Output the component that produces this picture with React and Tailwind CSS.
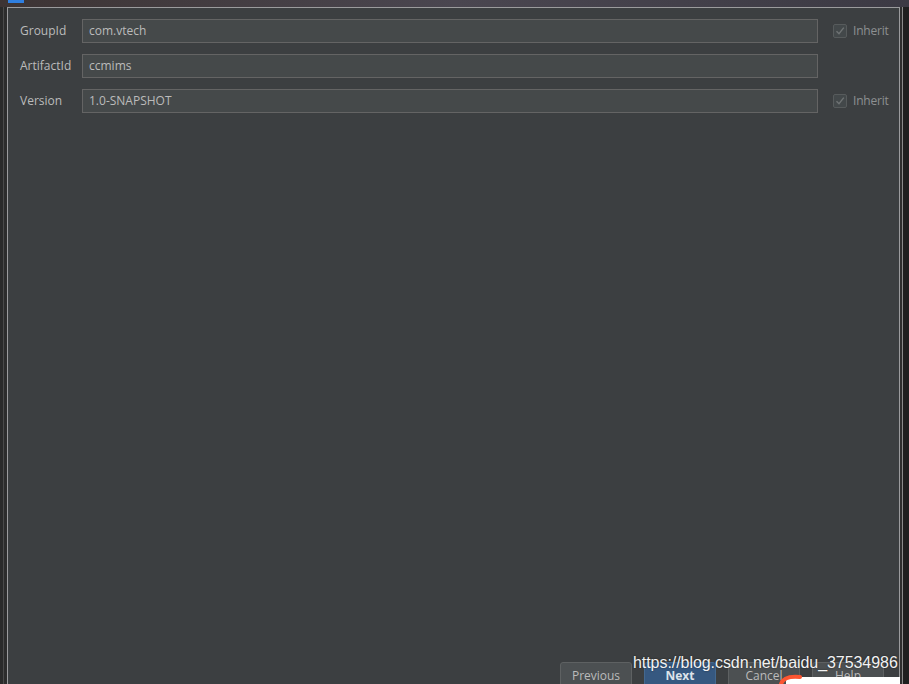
import React from 'react';

const font = { fontFamily: '"Open Sans", "Noto Sans", sans-serif' };

const Field = ({ label, value, inherit }) => (
  <div className="flex items-center h-[24px]">
    <div className="w-[62px] text-[12px] text-[#bbbbbb]">{label}</div>
    <div className="w-[736px] h-[24px] bg-[#45494a] border border-[#646464] flex items-center pl-[6px] text-[12px] text-[#bbbbbb]">
      {value}
    </div>
    {inherit && (
      <div className="flex items-center ml-[15px]">
        <div className="w-[14px] h-[14px] border border-[#575b5c] bg-[#43484a] rounded-[2px] flex items-center justify-center">
          <svg width="10" height="10" viewBox="0 0 10 10">
            <path d="M1.5 5.2 L4 7.8 L8.8 1.6" fill="none" stroke="#6f7374" strokeWidth="1.4" />
          </svg>
        </div>
        <span className="ml-[6px] text-[12px] tracking-[-0.2px] text-[#8d9091]">Inherit</span>
      </div>
    )}
  </div>
);

const Btn = ({ children, primary }) => (
  <div
    className={
      'w-[72px] h-[24px] rounded-t-[3px] border flex items-start justify-center pt-[4px] text-[12px] ' +
      (primary
        ? 'bg-[#365880] border-[#43688f] text-[#dde3ea] font-bold'
        : 'bg-[#4c5052] border-[#5e6162] text-[#bbbbbb]')
    }
  >
    {children}
  </div>
);

export default function App() {
  return (
    <div className="w-[909px] h-[684px] overflow-hidden bg-[#2b2b2d] flex flex-col relative" style={font}>
      {/* blurred desktop strip */}
      <div className="h-[7px] shrink-0 bg-gradient-to-r from-[#3d3434] via-[#4a4650] to-[#3c3a44] relative">
        <div className="absolute left-[8px] top-0 w-[16px] h-[3px] bg-[#2f7fe0]" />
      </div>
      <div className="flex flex-1 min-h-0">
        <div className="w-[3px] bg-[#2a2a2a]" />
        <div className="w-[1px] bg-[#4a4a4a]" />
        <div className="w-[3px] bg-[#2c2c2c]" />
        {/* window */}
        <div className="w-[893px] border-l border-r border-t border-[#9b9b9d] bg-[#3c3f41] flex flex-col">
          <div className="pl-[12px] pt-[11px] flex flex-col gap-[11px]">
            <Field label="GroupId" value="com.vtech" inherit />
            <Field label="ArtifactId" value="ccmims" />
            <Field label="Version" value="1.0-SNAPSHOT" inherit />
          </div>
          <div className="flex-1" />
          <div className="flex gap-[12px] pl-[552px] h-[22px]">
            <Btn>Previous</Btn>
            <Btn primary>Next</Btn>
            <Btn>Cancel</Btn>
            <Btn>Help</Btn>
          </div>
        </div>
        <div className="w-[2px] bg-[#2e2e2e]" />
        <div className="w-[1px] bg-[#8a8a8a]" />
        <div className="flex-1 bg-[#1f1f1f]" />
      </div>
      {/* watermark overlay */}
      <div
        className="absolute left-[633px] top-[653px] text-[16px] tracking-[-0.06px] leading-[20px] text-[#f2f2f2] whitespace-nowrap"
        style={{ fontFamily: '"Liberation Sans", Arial, sans-serif', textShadow: '0 0 2px rgba(0,0,0,0.6)' }}
      >
        https://blog.csdn.net/baidu_37534986
      </div>
      <div className="absolute left-[786px] top-[677px] w-[114px] h-[7px] bg-white" />
      <svg className="absolute left-[778px] top-[674px]" width="26" height="10" viewBox="0 0 26 10">
        <path d="M3 10 C5 4 12 2 22 3" fill="none" stroke="#fc5531" strokeWidth="4" strokeLinecap="round" />
      </svg>
    </div>
  );
}
